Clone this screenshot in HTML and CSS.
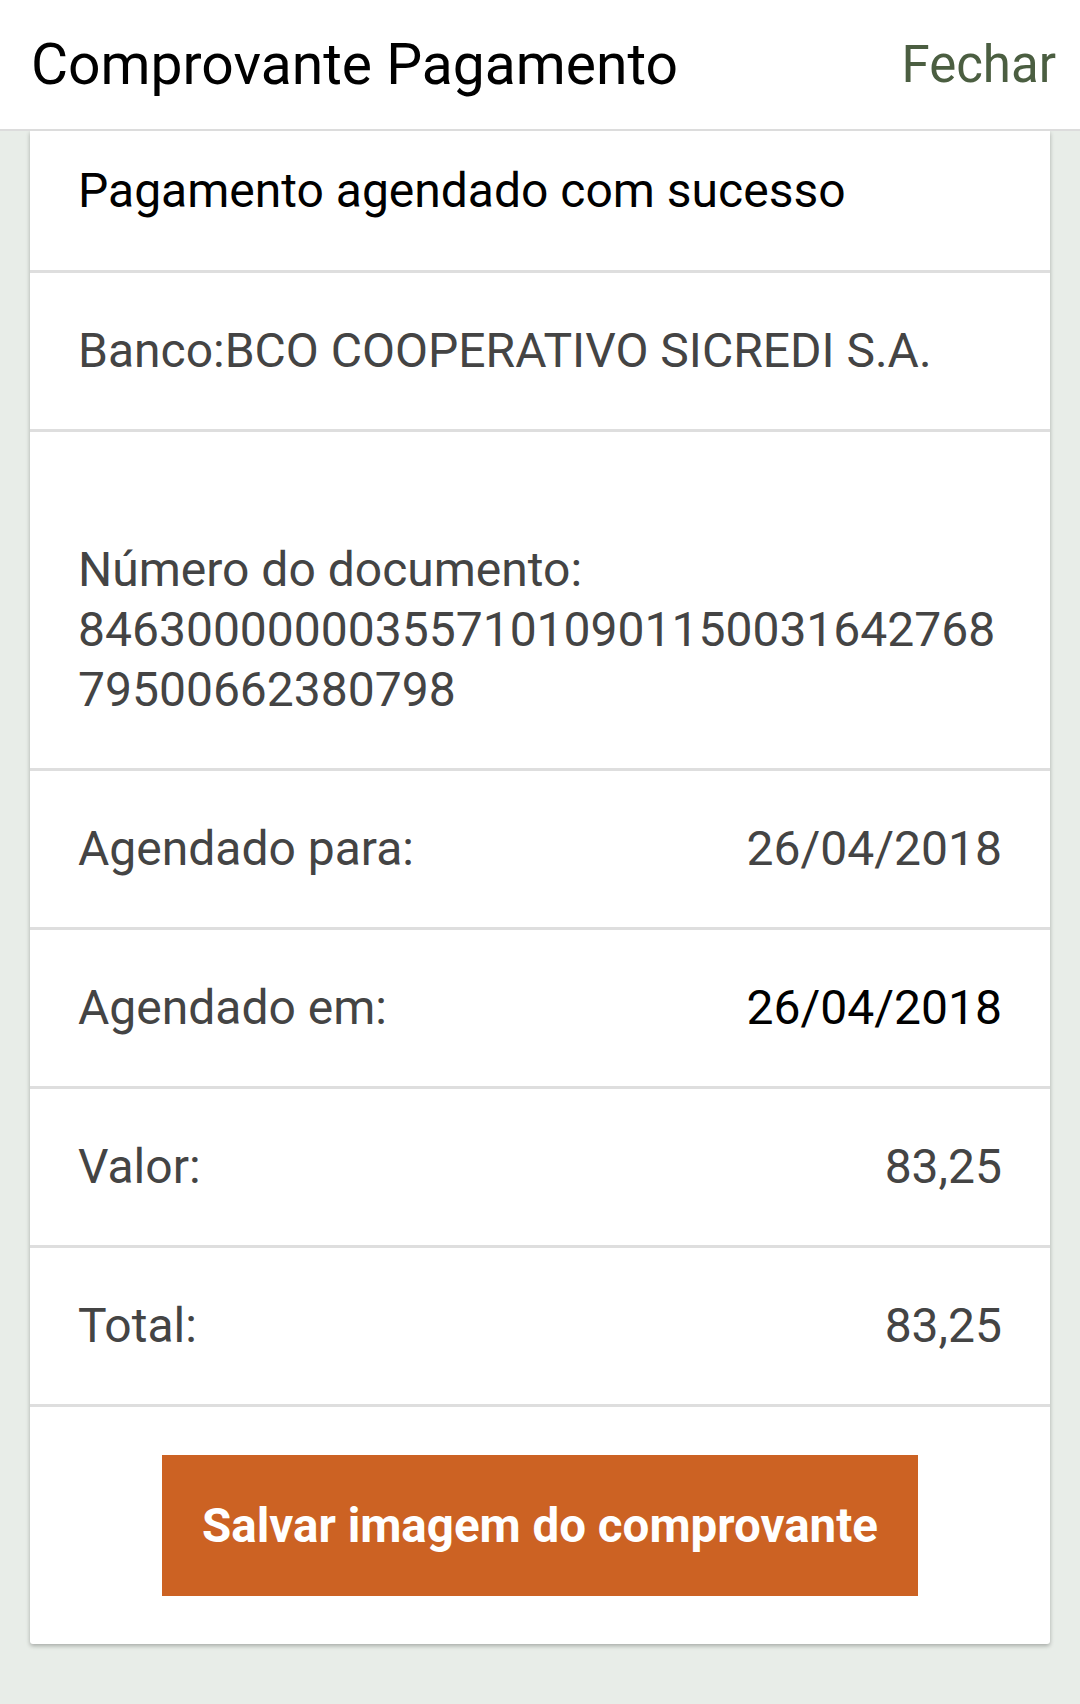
FILE: index.html
```html
<!DOCTYPE html>
<html lang="pt-BR">
<head>
<meta charset="utf-8">
<title>Comprovante Pagamento</title>
<link rel="stylesheet" href="styles.css">
</head>
<body>
<header class="topbar">
  <h1 class="topbar-title">Comprovante Pagamento</h1>
  <span class="topbar-action">Fechar</span>
</header>
<main class="content">
  <section class="card">
    <div class="row row-first"><span class="text-dark">Pagamento agendado com sucesso</span></div>
    <div class="row"><span>Banco:BCO COOPERATIVO SICREDI S.A.</span></div>
    <div class="row row-doc"><span><br>Número do documento:<br>846300000003557101090115003164276879500662380798</span></div>
    <div class="row row-split"><span>Agendado para:</span><span>26/04/2018</span></div>
    <div class="row row-split"><span>Agendado em:</span><span class="text-dark">26/04/2018</span></div>
    <div class="row row-split"><span>Valor:</span><span>83,25</span></div>
    <div class="row row-split"><span>Total:</span><span>83,25</span></div>
    <div class="row row-button"><button class="save-btn">Salvar imagem do comprovante</button></div>
  </section>
</main>
</body>
</html>
```

FILE: styles.css
```css
html, body {
  margin: 0;
  padding: 0;
}
body {
  width: 1080px;
  height: 1704px;
  background: #e8ede8;
  font-family: Roboto, "Noto Sans", sans-serif;
  overflow: hidden;
}
.topbar {
  position: relative;
  z-index: 2;
  height: 129px;
  background: #ffffff;
  border-bottom: 2px solid #dcdcdc;
  display: flex;
  align-items: center;
  justify-content: space-between;
  padding: 0 24px 0 31px;
}
.topbar-title {
  margin: 0;
  font-size: 57px;
  font-weight: 400;
  color: #000;
  line-height: 1;
}
.topbar-action {
  font-size: 51px;
  color: #4b5e41;
  line-height: 1;
}
.content {
  padding: 0 30px;
}
.card {
  background: #fff;
  box-shadow: 0 2px 4px rgba(0,0,0,0.28);
  border-radius: 0 0 3px 3px;
}
.row {
  padding: 48px 50px 48px 48px;
  border-top: 3px solid #dedede;
  font-size: 48px;
  line-height: 60px;
  color: #444;
  word-break: break-all;
}
.row-first {
  border-top: none;
  padding-top: 30px;
  padding-bottom: 49px;
}
.row-split {
  display: flex;
  justify-content: space-between;
  padding-right: 48px;
}
.text-dark {
  color: #000;
}
.row-button {
  display: flex;
  justify-content: center;
  padding: 48px 0 48px 0;
}
.save-btn {
  width: 756px;
  height: 141px;
  border: none;
  border-radius: 0;
  background: #cc6223;
  color: #fff;
  font-family: Roboto, "Noto Sans", sans-serif;
  font-weight: 700;
  font-size: 47.5px;
}
```
